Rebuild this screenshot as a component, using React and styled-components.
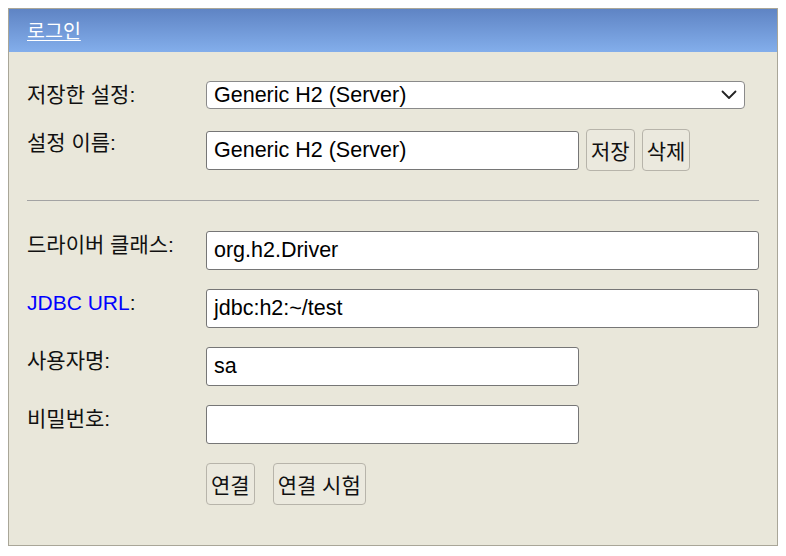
import React from "react";
import styled, { createGlobalStyle } from "styled-components";

const Global = createGlobalStyle`
  html, body { margin: 0; padding: 0; background: #ffffff; }
  body { padding: 8px; font-family: "Liberation Sans", "Noto Sans CJK KR", Arial, sans-serif; }
  * { box-sizing: border-box; }
`;

const FONT = `"Liberation Sans", "Noto Sans CJK KR", Arial, sans-serif`;

const Panel = styled.div`
  width: 770px;
  height: 538px;
  border: 1px solid #a9a698;
  background: #e9e7da;
  display: flex;
  flex-direction: column;
`;

const Header = styled.div`
  height: 43px;
  background: linear-gradient(to bottom, #5f84c4 0%, #83aeeb 100%);
  display: flex;
  align-items: center;
  padding: 0 0 3px 18px;
`;

const HeaderLink = styled.span`
  color: #ffffff;
  font-family: ${FONT};
  font-size: 19.5px;
  text-decoration: underline;
  text-underline-offset: 2px;
`;

const Body = styled.div`
  padding: 29px 18px 0 18px;
  display: flex;
  flex-direction: column;
`;

const Row = styled.div`
  display: grid;
  grid-template-columns: 179px auto;
  align-items: start;
  margin-top: ${(p) => p.$top || 0}px;
`;

const Label = styled.div`
  font-family: ${FONT};
  font-size: 21px;
  line-height: 28px;
  color: #111111;
  white-space: nowrap;
`;

const Blue = styled.span`
  color: #0000ff;
`;

const SelectBox = styled.div`
  width: 539px;
  height: 28px;
  background: #ffffff;
  border: 1px solid #8a8a8a;
  border-radius: 4px;
  display: flex;
  align-items: center;
  justify-content: space-between;
  padding: 0 7px 0 7px;
  font-family: ${FONT};
  font-size: 21.5px;
  color: #000;
`;

const Input = styled.div`
  width: ${(p) => p.$w}px;
  height: 39px;
  background: #ffffff;
  border: 1px solid #767676;
  border-radius: 3px;
  display: flex;
  align-items: center;
  padding: 0 7px;
  font-family: ${FONT};
  font-size: 21.5px;
  color: #000;
`;

const Controls = styled.div`
  display: flex;
  align-items: center;
  gap: ${(p) => p.$gap || 7}px;
`;

const Button = styled.div`
  height: 42px;
  padding: 0 4px;
  border: 1px solid #b7b4aa;
  border-radius: 4px;
  background: #ebe9de;
  display: flex;
  align-items: center;
  justify-content: center;
  font-family: ${FONT};
  font-size: 21px;
  color: #111;
  white-space: nowrap;
`;

const Separator = styled.div`
  height: 1px;
  background: #a3a3a3;
  margin: 29px 0 30px 0;
`;

const Chevron = () => (
  <svg width="16" height="10" viewBox="0 0 16 10" fill="none">
    <path d="M1.5 1.5 L8 8 L14.5 1.5" stroke="#222" strokeWidth="1.8" strokeLinecap="round" strokeLinejoin="round" />
  </svg>
);

export default function App() {
  return (
    <>
      <Global />
      <Panel>
        <Header>
          <HeaderLink>로그인</HeaderLink>
        </Header>
        <Body>
          <Row>
            <Label>저장한 설정:</Label>
            <SelectBox>
              <span>Generic H2 (Server)</span>
              <Chevron />
            </SelectBox>
          </Row>
          <Row $top={20}>
            <Label>설정 이름:</Label>
            <Controls>
              <Input $w={373}>Generic H2 (Server)</Input>
              <Button>저장</Button>
              <Button>삭제</Button>
            </Controls>
          </Row>
          <Separator />
          <Row>
            <Label>드라이버 클래스:</Label>
            <Input $w={553}>org.h2.Driver</Input>
          </Row>
          <Row $top={19}>
            <Label>
              <Blue>JDBC URL</Blue>:
            </Label>
            <Input $w={553}>jdbc:h2:~/test</Input>
          </Row>
          <Row $top={19}>
            <Label>사용자명:</Label>
            <Input $w={373}>sa</Input>
          </Row>
          <Row $top={19}>
            <Label>비밀번호:</Label>
            <Input $w={373}></Input>
          </Row>
          <Row $top={19}>
            <div />
            <Controls $gap={18}>
              <Button>연결</Button>
              <Button>연결 시험</Button>
            </Controls>
          </Row>
        </Body>
      </Panel>
    </>
  );
}
